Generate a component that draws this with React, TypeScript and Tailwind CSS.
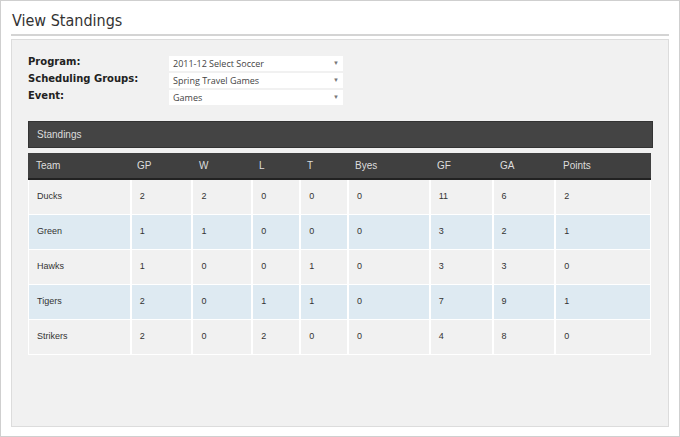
const rows = [
  ["Ducks", "2", "2", "0", "0", "0", "11", "6", "2"],
  ["Green", "1", "1", "0", "0", "0", "3", "2", "1"],
  ["Hawks", "1", "0", "0", "1", "0", "3", "3", "0"],
  ["Tigers", "2", "0", "1", "1", "0", "7", "9", "1"],
  ["Strikers", "2", "0", "2", "0", "0", "4", "8", "0"],
];
const heads = ["Team", "GP", "W", "L", "T", "Byes", "GF", "GA", "Points"];
const widths = ["w-[101px]", "w-[62px]", "w-[60px]", "w-[48px]", "w-[48px]", "w-[82px]", "w-[63px]", "w-[63px]", "w-[96px]"];

function Select({ value }: { value: string }) {
  return (
    <div className="w-[174px] h-[15px] bg-white flex items-center justify-between px-1 text-[9px] text-[#444]" style={{ fontFamily: '"Open Sans", sans-serif' }}>
      <span>{value}</span>
      <span className="text-[6px] text-[#777]">▼</span>
    </div>
  );
}

export default function App() {
  return (
    <div className="w-[680px] h-[437px] bg-white border border-[#cfcfcf] px-[10px] pt-[10px] pb-[9px] flex flex-col" style={{ fontFamily: '"Liberation Sans", Arial, sans-serif' }}>
      <h1 className="text-[16px] text-[#333] leading-[20px] pl-[1px] pb-[3px] border-b-2 border-[#d4d4d4]" style={{ fontFamily: '"DejaVu Sans Condensed", "Noto Sans", sans-serif' }}>View Standings</h1>
      <div className="mt-[3px] flex-1 bg-[#f1f1f1] border border-[#dcdcdc] pl-[16px] pr-[15px] pt-[16px]">
        <div className="flex flex-col gap-[2px]">
          {[["Program:", "2011-12 Select Soccer"], ["Scheduling Groups:", "Spring Travel Games"], ["Event:", "Games"]].map(([l, v]) => (
            <div key={l} className="flex items-start">
              <div className="w-[141px] text-[10px] font-bold text-[#222] leading-[12px]" style={{ fontFamily: '"DejaVu Sans", sans-serif' }}>{l}</div>
              <Select value={v} />
            </div>
          ))}
        </div>
        <div className="mt-[16px] h-[27px] bg-[#444] border border-[#333] text-[#ddd] text-[10px] flex items-center pl-[8px]">Standings</div>
        <div className="mt-[5px] w-[623px]">
          <div className="flex h-[27px] bg-[#404040] border-b-2 border-[#222] text-[#ddd] text-[10px]">
            {heads.map((h, i) => (
              <div key={h} className={`${widths[i]} flex items-center pl-[8px]`}>{h}</div>
            ))}
          </div>
          {rows.map((r, ri) => (
            <div key={r[0]} className={`flex h-[35px] border-b border-x border-white text-[9px] text-[#333] ${ri % 2 ? "bg-[#deeaf2]" : "bg-[#f1f1f1]"}`}>
              {r.map((c, i) => (
                <div key={i} className={`${widths[i]} flex items-center pl-[8px] border-l-2 border-white first:border-l-0`}>{c}</div>
              ))}
            </div>
          ))}
        </div>
      </div>
    </div>
  );
}
